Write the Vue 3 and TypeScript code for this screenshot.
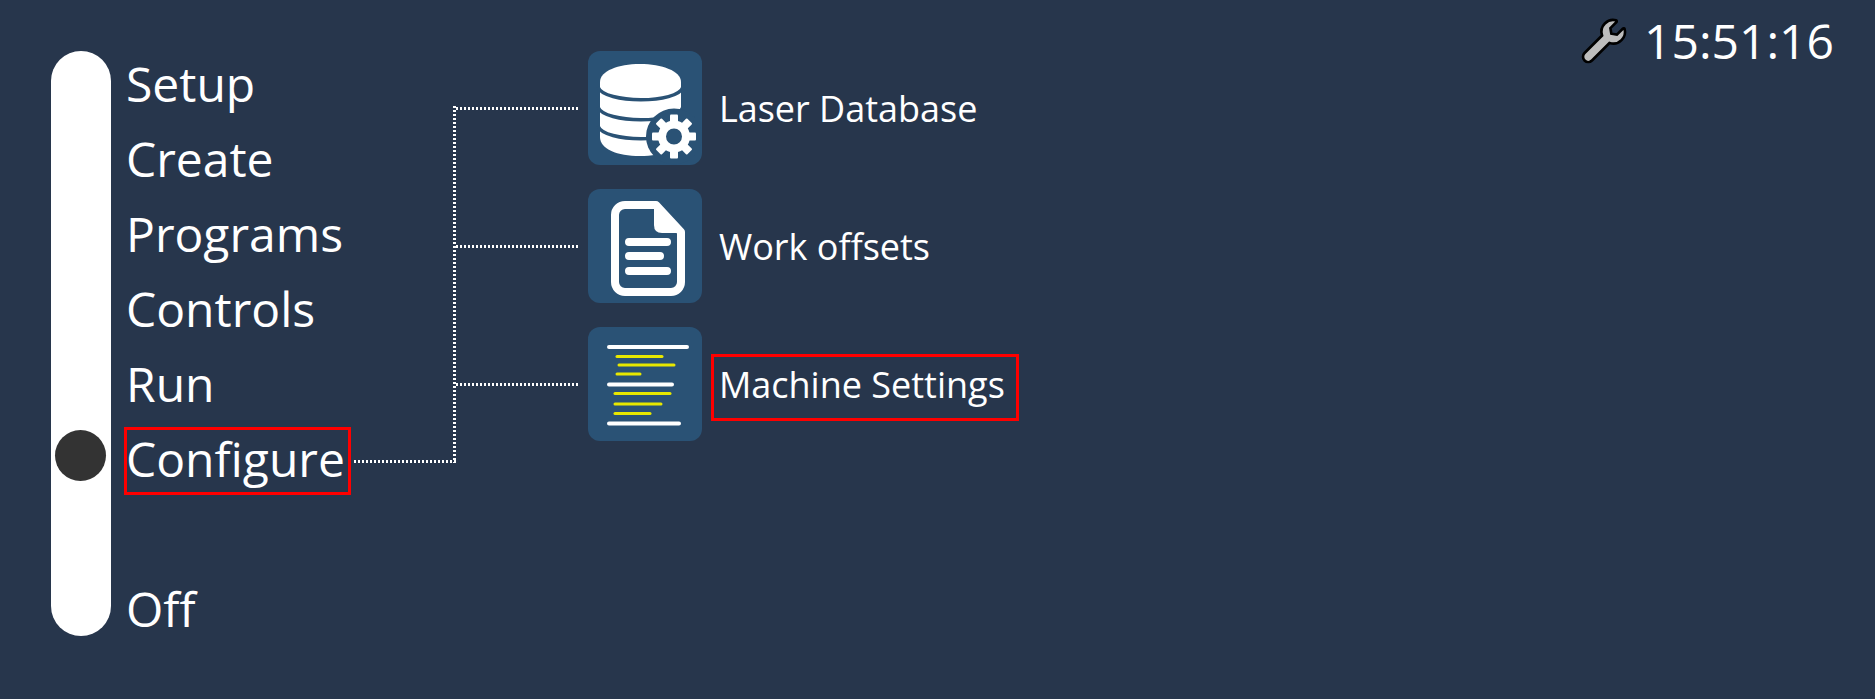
<script setup lang="ts">
const menu = ['Setup', 'Create', 'Programs', 'Controls', 'Run', 'Configure', '', 'Off']
const selected = 'Configure'

const gearTeeth = [0, 45, 90, 135, 180, 225, 270, 315]
const yellowBars = [
  { y: 29.5, x1: 29, x2: 74 },
  { y: 38, x1: 31, x2: 86 },
  { y: 47, x1: 29, x2: 52 },
  { y: 66.5, x1: 27, x2: 82 },
  { y: 77, x1: 27, x2: 73 },
  { y: 86.5, x1: 27, x2: 62 },
]
</script>

<template>
  <div class="page">
    <div class="nav">
      <div class="track">
        <div class="knob"></div>
      </div>

      <ul class="menu">
        <li v-for="(item, i) in menu" :key="i" class="menu-item" :class="{ boxed: item === selected }">{{ item }}</li>
      </ul>

      <div class="elbow"></div>

      <div class="submenu">
        <div class="sub-row">
          <div class="stub"></div>
          <div class="tile">
            <svg viewBox="0 0 114 114" width="114" height="114">
              <path class="white" d="M12 31C12 20 30 13 52 13s41 7 41 18v55c0 12-18 19-41 19s-40-7-40-19z" />
              <path class="seam" d="M10 36c6 17 80 17 85 0M10 56c6 17 80 17 85 0M10 75c6 17 80 17 85 0" />
              <circle class="blue" cx="86" cy="85.5" r="28" />
              <rect
                v-for="deg in gearTeeth"
                :key="deg"
                class="white"
                x="82"
                y="63.5"
                width="8"
                height="12"
                rx="1"
                :transform="`rotate(${deg} 86 85.5)`"
              />
              <circle class="gear-ring" cx="86" cy="85.5" r="12" />
            </svg>
          </div>
          <span class="sub-label">Laser Database</span>
        </div>

        <div class="sub-row">
          <div class="stub"></div>
          <div class="tile">
            <svg viewBox="0 0 114 114" width="114" height="114">
              <path class="doc" d="M37 16H68L93 43V93a10 10 0 0 1-10 10H37a10 10 0 0 1-10-10V26a10 10 0 0 1 10-10z" />
              <path class="white" d="M66 14V36q0 8 8 8H95z" />
              <path class="doc-line" d="M41 53H79M41 67H72M41 82H79" />
            </svg>
          </div>
          <span class="sub-label">Work offsets</span>
        </div>

        <div class="sub-row">
          <div class="stub"></div>
          <div class="tile">
            <svg viewBox="0 0 114 114" width="114" height="114">
              <path class="list-white" d="M21 20H99M21 57.5H84M21 96.5H91" />
              <line
                v-for="bar in yellowBars"
                :key="bar.y"
                class="list-yellow"
                :x1="bar.x1"
                :x2="bar.x2"
                :y1="bar.y"
                :y2="bar.y"
              />
            </svg>
          </div>
          <span class="sub-label boxed">Machine Settings</span>
        </div>
      </div>
    </div>

    <div class="clock">
      <svg class="wrench" viewBox="0 0 512 512" width="42" height="42">
        <path d="M507.73 109.1c-2.24-9.03-13.54-12.09-20.12-5.51l-74.36 74.36-67.88-11.31-11.31-67.88 74.36-74.36c6.62-6.62 3.43-17.9-5.66-20.16-47.38-11.74-99.55.91-136.58 37.93-39.64 39.64-50.55 97.1-34.05 147.2L18.74 402.76c-24.99 24.99-24.99 65.51 0 90.5 24.99 24.99 65.51 24.99 90.5 0l213.21-213.21c50.12 16.71 107.47 5.68 147.37-34.22 37.07-37.07 49.7-89.32 37.91-136.73z" />
      </svg>
      <span class="time">15:51:16</span>
    </div>
  </div>
</template>

<style>
html,
body {
  margin: 0;
  background: #27364c;
}
</style>

<style scoped>
.page {
  display: flex;
  justify-content: space-between;
  height: 699px;
  box-sizing: border-box;
  padding: 0 41px 0 51px;
  background: #27364c;
  color: #fff;
  font-family: 'Open Sans', sans-serif;
}

.nav {
  display: flex;
  align-items: flex-start;
  padding-top: 51px;
}

.track {
  position: relative;
  width: 60px;
  height: 585px;
  border-radius: 30px;
  background: #fff;
}

.knob {
  position: absolute;
  left: 4px;
  top: 379px;
  width: 51px;
  height: 51px;
  border-radius: 50%;
  background: #333;
}

.menu {
  list-style: none;
  margin: 1px 0 0 13px;
  padding: 0;
  display: flex;
  flex-direction: column;
  align-items: flex-start;
  gap: 7px;
}

.menu-item {
  height: 58px;
  line-height: 58px;
  padding: 0 3px 4px 0;
  border: 3px solid transparent;
  font-size: 48px;
  text-indent: -1px;
  white-space: nowrap;
}

.boxed {
  border-color: #f00;
}

.elbow {
  width: 102px;
  height: 357px;
  margin: 55px 0 0 3px;
  background:
    repeating-linear-gradient(to bottom, #fff 0 2px, transparent 2px 4px) right top / 3px 100% no-repeat,
    repeating-linear-gradient(to right, #fff 0 2px, transparent 2px 4px) left bottom / 100% 3px no-repeat;
}

.submenu {
  display: flex;
  flex-direction: column;
  gap: 24px;
}

.sub-row {
  display: flex;
  align-items: center;
  height: 114px;
}

.stub {
  width: 124px;
  height: 3px;
  margin-right: 8px;
  background: repeating-linear-gradient(to right, #fff 0 2px, transparent 2px 4px);
}

.tile {
  width: 114px;
  height: 114px;
  border-radius: 12px;
  background: #2a5275;
}

.tile svg {
  display: block;
}

.sub-label {
  margin: 7px 0 0 9px;
  padding: 0 11px 6px 5px;
  border: 3px solid transparent;
  height: 55px;
  line-height: 55px;
  font-size: 36px;
  white-space: nowrap;
}

.sub-label.boxed {
  border-color: #f00;
}

.white {
  fill: #fff;
}

.blue {
  fill: #2a5275;
}

.seam {
  fill: none;
  stroke: #2a5275;
  stroke-width: 3.5;
}

.gear-ring {
  fill: #2a5275;
  stroke: #fff;
  stroke-width: 8;
}

.doc {
  fill: none;
  stroke: #fff;
  stroke-width: 8;
  stroke-linejoin: round;
}

.doc-line {
  fill: none;
  stroke: #fff;
  stroke-width: 8;
  stroke-linecap: round;
}

.list-white {
  fill: none;
  stroke: #fff;
  stroke-width: 4;
  stroke-linecap: round;
}

.list-yellow {
  stroke: #e8e800;
  stroke-width: 3;
  stroke-linecap: round;
}

.clock {
  display: flex;
  align-items: center;
  align-self: flex-start;
  gap: 19px;
  height: 64px;
  margin-top: 9px;
}

.wrench {
  fill: #bdbdbd;
  stroke: #000;
  stroke-width: 32;
  overflow: visible;
}

.time {
  font-size: 48px;
  line-height: 64px;
}
</style>
